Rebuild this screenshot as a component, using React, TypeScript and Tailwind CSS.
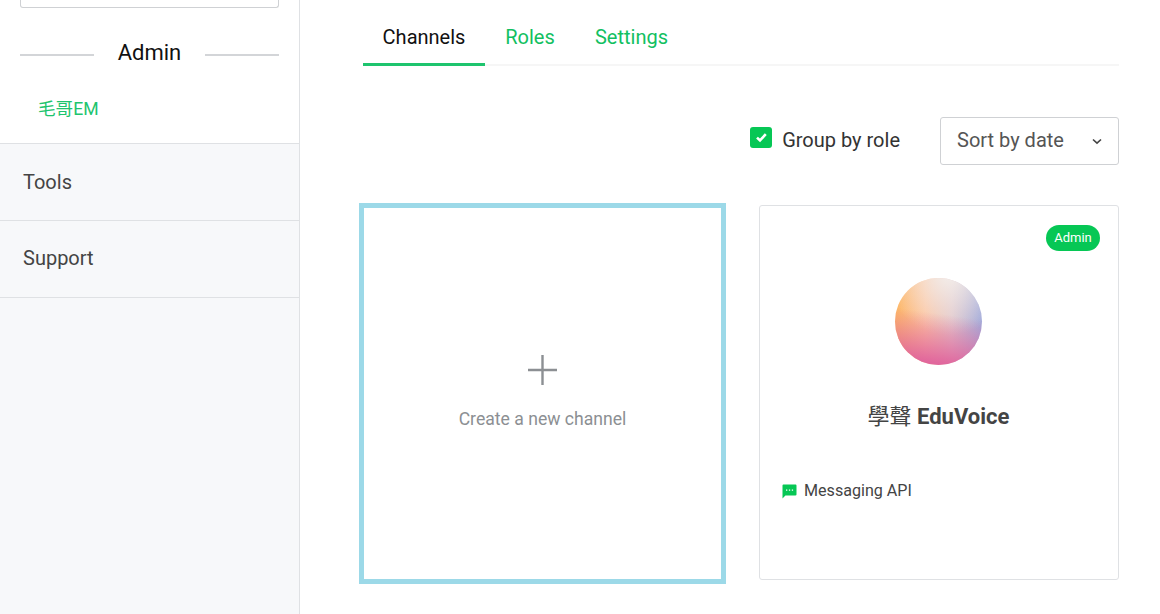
import React from "react";

const font = { fontFamily: '"Roboto", "Noto Sans CJK TC", sans-serif' };

export default function App() {
  return (
    <div style={font} className="flex h-[614px] w-[1160px] overflow-hidden bg-white">
      <aside className="flex h-full w-[300px] shrink-0 flex-col border-r border-[#dfe1e4] bg-white">
        <div className="mx-[20px] h-[8px] w-[259px] shrink-0 rounded-b-[3px] border-x border-b border-[#cfd1d4]" />
        <div className="mt-[31px] flex h-[28px] items-center px-[20px]">
          <span className="mt-[3px] h-[2px] w-[74px] bg-[#d3d5d8]" />
          <span className="flex-1 text-center text-[22px] leading-[28px] text-[#111]">Admin</span>
          <span className="mt-[3px] h-[2px] w-[74px] bg-[#d3d5d8]" />
        </div>
        <div className="mt-[30px] pl-[38px] text-[17.6px] leading-[24px] text-[#1ec46e]">毛哥EM</div>
        <div className="mt-[22px] flex-1 bg-[#f7f8fa]">
          <div className="flex h-[78px] items-center border-y border-[#dfe1e4] pl-[23px] text-[20px] text-[#444]">Tools</div>
          <div className="flex h-[77px] items-center border-b border-[#dfe1e4] pb-[2px] pl-[23px] text-[20px] text-[#444]">Support</div>
        </div>
      </aside>
      <main className="flex-1 pl-[63px] pr-[41px]">
        <nav className="mt-[10px] flex h-[56px] border-b-2 border-[#f6f6f6] text-[20px]">
          <div className="flex h-[56px] w-[122px] items-center justify-center border-b-[3px] border-[#1ec46e] text-[#111]">Channels</div>
          <div className="flex h-[54px] w-[90px] items-center justify-center text-[#12c061]">Roles</div>
          <div className="flex h-[54px] w-[113px] items-center justify-center text-[#12c061]">Settings</div>
        </nav>
        <div className="mt-[51px] flex h-[48px] items-center justify-end">
          <span className="-mt-[8px] flex h-[21px] w-[22px] items-center justify-center rounded-[3px] bg-[#06c755]">
            <svg width="13" height="13" viewBox="0 0 13 13" fill="none">
              <path d="M2 6.6 5 9.4 10.8 3.2" stroke="#fff" strokeWidth="2.6" />
            </svg>
          </span>
          <span className="ml-[10px] pb-[2px] text-[20px] text-[#333]">Group by role</span>
          <div className="ml-[40px] flex h-[48px] w-[179px] items-center justify-between rounded-[3px] border border-[#cfd1d4] pl-[16px] pr-[16px] text-[20px] text-[#555]">
            <span className="pb-[2px]">Sort by date</span>
            <svg width="10" height="7" viewBox="0 0 10 7" fill="none">
              <path d="M1 1.5 5 5.2 9 1.5" stroke="#444" strokeWidth="1.6" />
            </svg>
          </div>
        </div>
        <div className="-ml-[4px] mt-[38px] flex items-start gap-[33px]">
          <div className="flex h-[381px] w-[367px] flex-col items-center border-[5px] border-[#9cd9e8] bg-white">
            <svg className="mt-[147px]" width="30" height="30" viewBox="0 0 30 30" fill="none">
              <path d="M14.5 0V30M0 15H29" stroke="#8c8f93" strokeWidth="2.4" />
            </svg>
            <div className="mt-[21px] text-[17.6px] leading-[26px] text-[#8c8f93]">Create a new channel</div>
          </div>
          <div className="relative mt-[2px] h-[375px] w-[360px] rounded-[3px] border border-[#dfe1e4] bg-white">
            <span className="absolute right-[18px] top-[19px] flex h-[26px] w-[54px] items-center justify-center rounded-full bg-[#06c755] text-[13px] text-white">Admin</span>
            <div className="flex flex-col items-center pr-[2px]">
              <div className="relative mt-[72px] h-[87px] w-[87px] overflow-hidden rounded-full bg-[linear-gradient(90deg,#fdb765_0%,#fcc4a0_35%,#e0c4c8_65%,#a0a9da_100%)]">
                <div className="absolute inset-0 bg-[radial-gradient(circle_at_62%_-5%,rgba(244,240,236,0.95)_0%,rgba(244,240,236,0)_58%)]" />
                <div className="absolute inset-0 bg-[linear-gradient(188deg,rgba(224,98,156,0)_42%,rgba(224,98,156,0.95)_92%)]" />
              </div>
            </div>
            <div className="mt-[37px] pr-[1px] text-center text-[22px] font-bold leading-[30px] text-[#444]">
              <span className="font-normal">學聲</span> EduVoice
            </div>
            <div className="absolute left-[22px] top-[274px] flex items-center text-[16.1px] leading-[22px] text-[#444]">
              <svg width="15" height="15" viewBox="0 0 15 15">
                <path d="M.5 1.5C.5 1 .9.6 1.4.6h12.2c.5 0 .9.4.9.9v9c0 .5-.4.9-.9.9H3.4L.5 14.4Z" fill="#06c755" />
                <path d="M4 5.6h1.3v1.2H4zM6.9 5.6h1.3v1.2H6.9zM9.8 5.6h1.3v1.2H9.8z" fill="#fff" />
              </svg>
              <span className="ml-[7px]">Messaging API</span>
            </div>
          </div>
        </div>
      </main>
    </div>
  );
}
